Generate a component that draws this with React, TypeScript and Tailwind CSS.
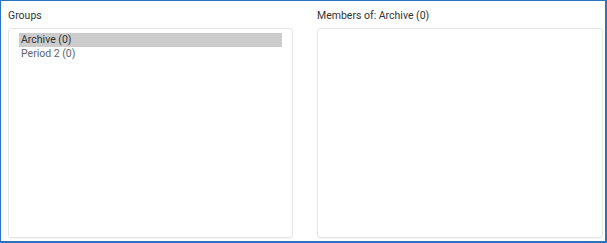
import React from "react";

const groups = [
  { name: "Archive (0)", selected: true },
  { name: "Period 2 (0)", selected: false },
];

const App = () => {
  return (
    <div className="w-[607px] h-[243px] bg-white border-t border-l border-r-2 border-b-2 border-[#2a73c0] font-['Roboto',sans-serif] text-[10.5px] text-[#333]">
      <div className="flex gap-[24px] pl-[7px] pt-[7px]">
        <div className="w-[285px] flex flex-col">
          <div className="h-[15px] leading-[15px]">Groups</div>
          <div className="mt-[5px] h-[210px] border border-[#e4e6e6] rounded-[3px] shadow-[0_1px_1px_rgba(0,0,0,0.04)] pt-[4px] px-[10px]">
            <ul>
              {groups.map((g) => (
                <li
                  key={g.name}
                  className={
                    g.selected
                      ? "h-[14px] leading-[14px] pl-[2px] bg-[#cccccc] text-[#333]"
                      : "h-[14px] leading-[14px] pl-[2px] text-[#5b6472]"
                  }
                >
                  {g.name}
                </li>
              ))}
            </ul>
          </div>
        </div>
        <div className="w-[286px] flex flex-col">
          <div className="h-[15px] leading-[15px]">Members of: Archive (0)</div>
          <div className="mt-[5px] h-[210px] border border-[#e4e6e6] rounded-[3px] shadow-[0_1px_1px_rgba(0,0,0,0.04)]"></div>
        </div>
      </div>
    </div>
  );
};

export default App;
